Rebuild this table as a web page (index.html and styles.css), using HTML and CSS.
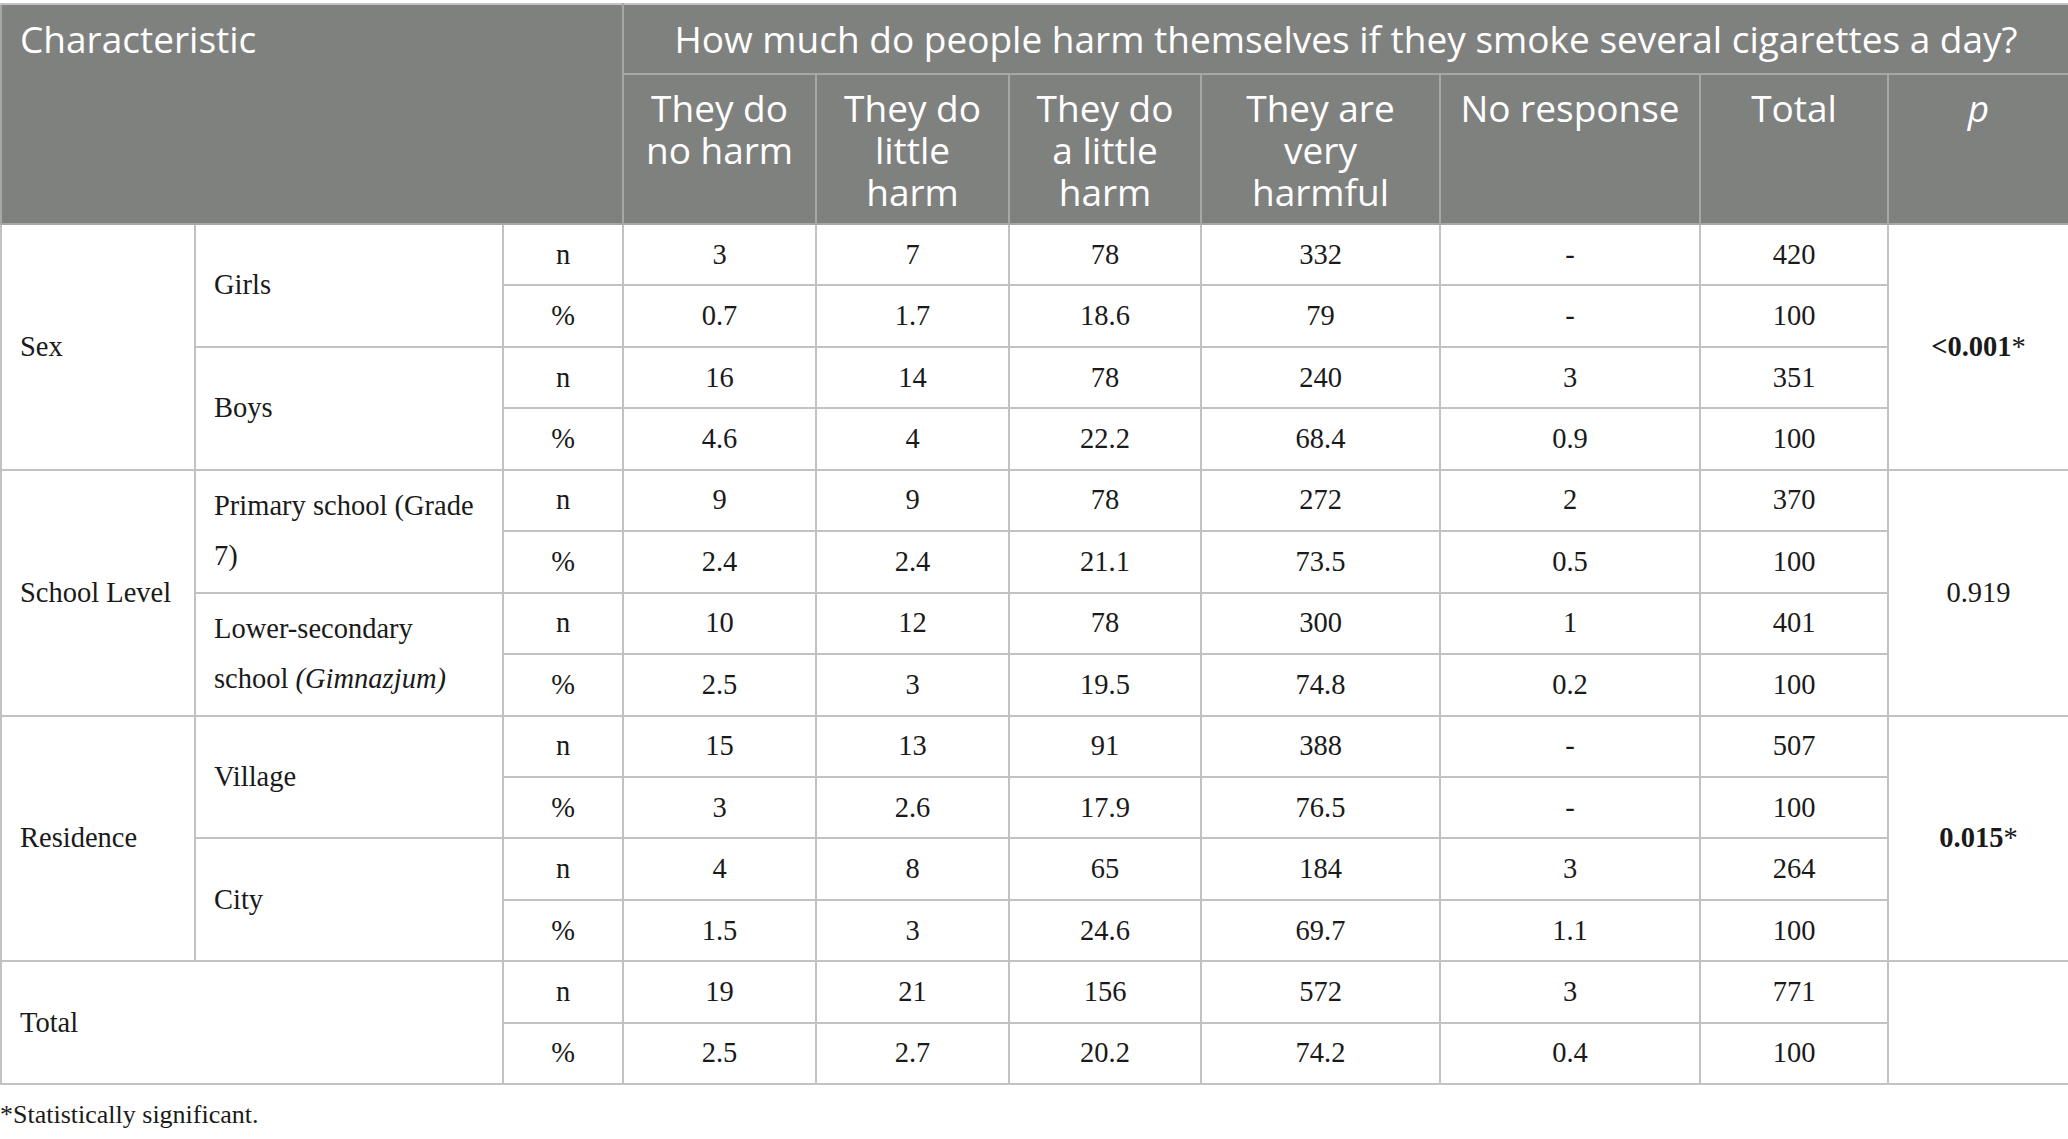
FILE: index.html
```html
<!DOCTYPE html>
<html lang="en">
<head>
<meta charset="utf-8">
<title>Table</title>
<link rel="stylesheet" href="styles.css">
</head>
<body>
<div class="page">
<table class="data">
  <colgroup>
    <col class="c1"><col class="c2"><col class="c3"><col class="c4"><col class="c5">
    <col class="c6"><col class="c7"><col class="c8"><col class="c9"><col class="c10">
  </colgroup>
  <thead>
    <tr class="h1">
      <th class="char" rowspan="2" colspan="3">Characteristic</th>
      <th class="q" colspan="7">How much do people harm themselves if they smoke several cigarettes a day?</th>
    </tr>
    <tr class="h2">
      <th>They do<br>no harm</th>
      <th>They do<br>little<br>harm</th>
      <th>They do<br>a little<br>harm</th>
      <th>They are<br>very<br>harmful</th>
      <th>No response</th>
      <th>Total</th>
      <th><i>p</i></th>
    </tr>
  </thead>
  <tbody>
    <tr>
      <td class="lab" rowspan="4">Sex</td>
      <td class="lab" rowspan="2">Girls</td>
      <td>n</td><td>3</td><td>7</td><td>78</td><td>332</td><td>-</td><td>420</td>
      <td rowspan="4"><b>&lt;0.001</b>*</td>
    </tr>
    <tr><td>%</td><td>0.7</td><td>1.7</td><td>18.6</td><td>79</td><td>-</td><td>100</td></tr>
    <tr>
      <td class="lab" rowspan="2">Boys</td>
      <td>n</td><td>16</td><td>14</td><td>78</td><td>240</td><td>3</td><td>351</td>
    </tr>
    <tr><td>%</td><td>4.6</td><td>4</td><td>22.2</td><td>68.4</td><td>0.9</td><td>100</td></tr>
    <tr>
      <td class="lab" rowspan="4">School Level</td>
      <td class="lab tall" rowspan="2">Primary school (Grade<br>7)</td>
      <td>n</td><td>9</td><td>9</td><td>78</td><td>272</td><td>2</td><td>370</td>
      <td rowspan="4">0.919</td>
    </tr>
    <tr><td>%</td><td>2.4</td><td>2.4</td><td>21.1</td><td>73.5</td><td>0.5</td><td>100</td></tr>
    <tr>
      <td class="lab tall" rowspan="2">Lower-secondary<br>school <i>(Gimnazjum)</i></td>
      <td>n</td><td>10</td><td>12</td><td>78</td><td>300</td><td>1</td><td>401</td>
    </tr>
    <tr><td>%</td><td>2.5</td><td>3</td><td>19.5</td><td>74.8</td><td>0.2</td><td>100</td></tr>
    <tr>
      <td class="lab" rowspan="4">Residence</td>
      <td class="lab" rowspan="2">Village</td>
      <td>n</td><td>15</td><td>13</td><td>91</td><td>388</td><td>-</td><td>507</td>
      <td rowspan="4"><b>0.015</b>*</td>
    </tr>
    <tr><td>%</td><td>3</td><td>2.6</td><td>17.9</td><td>76.5</td><td>-</td><td>100</td></tr>
    <tr>
      <td class="lab" rowspan="2">City</td>
      <td>n</td><td>4</td><td>8</td><td>65</td><td>184</td><td>3</td><td>264</td>
    </tr>
    <tr><td>%</td><td>1.5</td><td>3</td><td>24.6</td><td>69.7</td><td>1.1</td><td>100</td></tr>
    <tr>
      <td class="lab" rowspan="2" colspan="2">Total</td>
      <td>n</td><td>19</td><td>21</td><td>156</td><td>572</td><td>3</td><td>771</td>
      <td rowspan="2"></td>
    </tr>
    <tr><td>%</td><td>2.5</td><td>2.7</td><td>20.2</td><td>74.2</td><td>0.4</td><td>100</td></tr>
  </tbody>
</table>
<p class="note">*Statistically significant.</p>
</div>
</body>
</html>
```
FILE: styles.css
```css
html, body {
  margin: 0;
  padding: 0;
  background: #ffffff;
}

.page {
  padding-top: 3px;
}

.data {
  border-collapse: collapse;
  table-layout: fixed;
  width: 2068px;
}

.c1 { width: 194px; }
.c2 { width: 308px; }
.c3 { width: 120px; }
.c4 { width: 193px; }
.c5 { width: 193px; }
.c6 { width: 192px; }
.c7 { width: 239px; }
.c8 { width: 260px; }
.c9 { width: 188px; }
.c10 { width: 181px; }

.data th,
.data td {
  border: 2px solid #c2c2c2;
}

.data thead th {
  background: #7f817f;
  color: #ffffff;
  font-family: "Open Sans", "Noto Sans", sans-serif;
  font-weight: 400;
  font-size: 37px;
  line-height: 42px;
  text-align: center;
  vertical-align: top;
  padding: 12px 4px 0;
  border-color: #a6a7a6;
}

.data thead tr:first-child th {
  border-top-color: #c2c2c2;
}

.data thead .char {
  text-align: left;
  padding-left: 18px;
  padding-top: 13px;
}

.data thead .q {
  padding-top: 13px;
}

.h1 { height: 70px; }
.h2 { height: 150px; }

.data tbody tr {
  height: 61.45px;
}

.data tbody td {
  font-family: "Liberation Serif", "Times New Roman", serif;
  font-size: 28.5px;
  line-height: 34px;
  color: #1a1a1a;
  text-align: center;
  vertical-align: middle;
  padding: 0 6px;
}

.data tbody td.lab {
  text-align: left;
  padding-left: 18px;
}

.data tbody td.tall {
  line-height: 50px;
}

.note {
  margin: 14px 0 0;
  font-family: "Liberation Serif", "Times New Roman", serif;
  font-size: 26px;
  line-height: 32px;
  color: #1a1a1a;
}
```
